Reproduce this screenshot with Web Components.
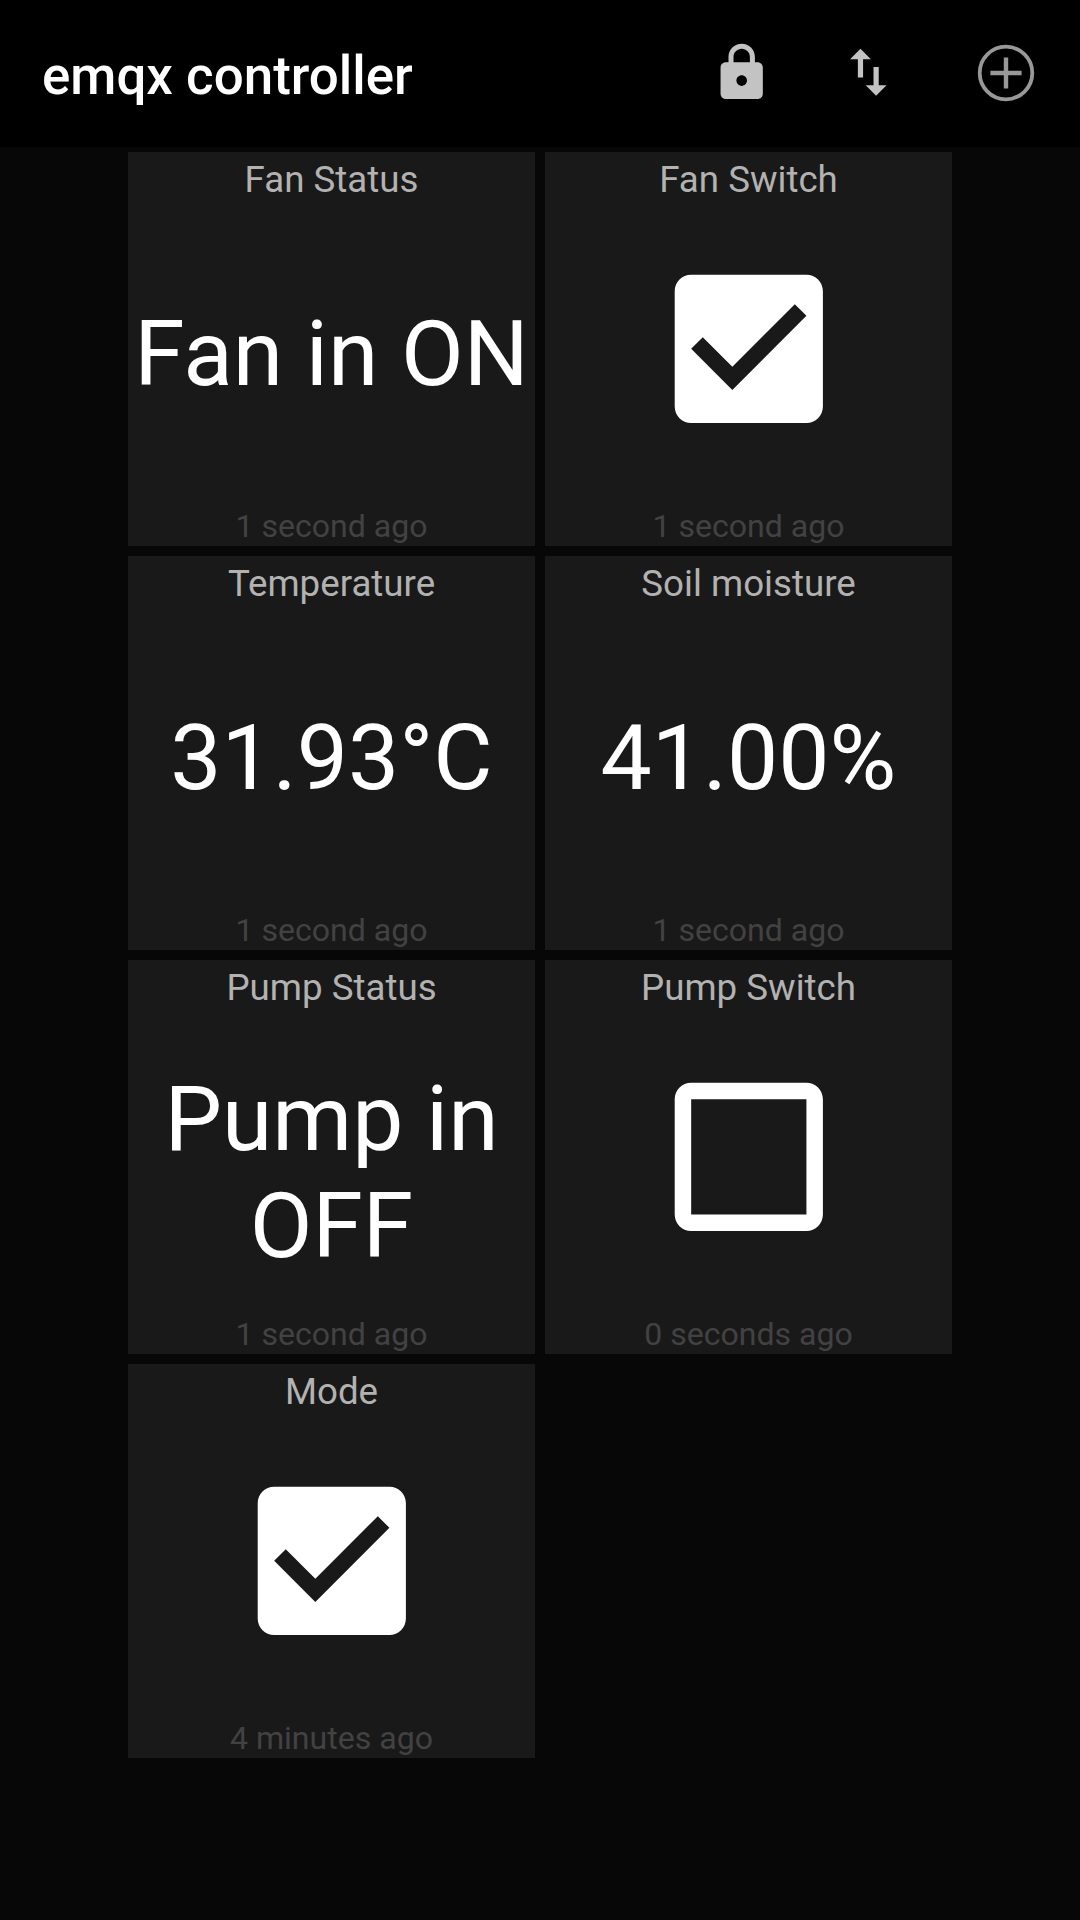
<!DOCTYPE html>
<html lang="en">
<head>
<meta charset="utf-8">
<title>emqx controller</title>
<style>
  html, body { margin: 0; height: 100%; background: #070707; }
  body { font-family: Roboto, sans-serif; color: #fff; }
</style>
</head>
<body>
<control-panel>
  <app-bar slot="bar">emqx controller</app-bar>
  <panel-tile label="Fan Status" time="1 second ago">Fan in ON</panel-tile>
  <panel-tile label="Fan Switch" time="1 second ago"><check-mark checked></check-mark></panel-tile>
  <panel-tile label="Temperature" time="1 second ago">31.93°C</panel-tile>
  <panel-tile label="Soil moisture" time="1 second ago">41.00%</panel-tile>
  <panel-tile label="Pump Status" time="1 second ago" multiline>Pump in OFF</panel-tile>
  <panel-tile label="Pump Switch" time="0 seconds ago"><check-mark></check-mark></panel-tile>
  <panel-tile label="Mode" time="4 minutes ago"><check-mark checked></check-mark></panel-tile>
</control-panel>
<script>
function define(name, render) {
  customElements.define(name, class extends HTMLElement {
    connectedCallback() {
      if (!this.shadowRoot) this.attachShadow({ mode: 'open' }).innerHTML = render(this);
    }
  });
}

define('control-panel', () => `
  <style>
    :host { display: flex; flex-direction: column; min-height: 1920px; }
    main {
      display: grid; grid-template-columns: 407.5px 407.5px; grid-auto-rows: 394px;
      column-gap: 9.5px; row-gap: 10px; justify-content: center; padding-top: 5px;
    }
  </style>
  <slot name="bar"></slot>
  <main><slot></slot></main>`);

define('app-bar', () => `
  <style>
    :host { display: flex; align-items: center; height: 147px; box-sizing: border-box;
      background: #000; padding: 0 43px 0 42px; }
    h1 { flex: 1; margin: 0; padding-top: 4px; font-size: 52.9px; line-height: 62px; font-weight: 500; white-space: nowrap; }
    nav { display: flex; align-items: center; }
    svg { display: block; }
    .lock { margin: 0 63.6px 2px 0; fill: #c3c3c3; }
    .swap { margin: 0 75px 2px 0; fill: #c3c3c3; }
  </style>
  <h1><slot></slot></h1>
  <nav>
    <svg class="lock" width="63.4" height="63.4" viewBox="0 0 24 24"><path d="M18 8h-1V6c0-2.76-2.24-5-5-5S7 3.24 7 6v2H6c-1.1 0-2 .9-2 2v10c0 1.1.9 2 2 2h12c1.1 0 2-.9 2-2V10c0-1.1-.9-2-2-2zm-6 9c-1.1 0-2-.9-2-2s.9-2 2-2 2 .9 2 2-.9 2-2 2zm3.1-9H8.9V6c0-1.71 1.39-3.1 3.1-3.1 1.71 0 3.1 1.39 3.1 3.1v2z"/></svg>
    <svg class="swap" width="62.6" height="62.6" viewBox="0 0 24 24"><path d="M16 17.01V10h-2v7.01h-3L15 21l4-3.99h-3zM9 3L5 6.99h3V14h2V6.99h3L9 3z"/></svg>
    <svg width="62" height="62" viewBox="0 0 62 62" fill="none"><circle cx="31" cy="31" r="26.3" stroke="#989898" stroke-width="3.8"/><path d="M15.4 31h31.2M31 15.4v31.2" stroke="#989898" stroke-width="4.4"/></svg>
  </nav>`);

define('panel-tile', el => `
  <style>
    :host { display: flex; flex-direction: column; align-items: center; box-sizing: border-box;
      background: #191919; padding: 6px 0 1px; text-align: center; }
    .label { font-size: 36.7px; line-height: 43px; color: #b2b2b2; white-space: nowrap; }
    .value { flex: 1; min-height: 0; width: 100%; display: flex; align-items: center; justify-content: center;
      font-size: 91.2px; line-height: 106.7px; }
    :host([multiline]) .value { padding-top: 22px; box-sizing: border-box; }
    .time { font-size: 32.1px; line-height: 38px; color: #424242; white-space: nowrap; }
  </style>
  <div class="label">${el.getAttribute('label')}</div>
  <div class="value"><div><slot></slot></div></div>
  <div class="time">${el.getAttribute('time')}</div>`);

define('check-mark', el => `
  <style>
    :host { display: block; padding-bottom: 11px; }
    svg { display: block; fill: #fff; }
  </style>
  <svg width="197.6" height="197.6" viewBox="0 0 24 24"><path d="${el.hasAttribute('checked')
    ? 'M19 3H5c-1.11 0-2 .9-2 2v14c0 1.1.89 2 2 2h14c1.11 0 2-.9 2-2V5c0-1.1-.89-2-2-2zm-9 14l-5-5 1.41-1.41L10 14.17l7.59-7.59L19 8l-9 9z'
    : 'M19 5v14H5V5h14m0-2H5c-1.1 0-2 .9-2 2v14c0 1.1.9 2 2 2h14c1.1 0 2-.9 2-2V5c0-1.1-.9-2-2-2z'}"/></svg>`);
</script>
</body>
</html>
